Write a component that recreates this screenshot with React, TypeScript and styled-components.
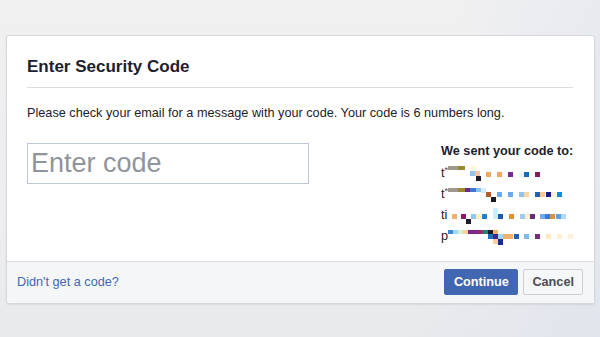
import React from "react";
import styled, { createGlobalStyle } from "styled-components";

const Global = createGlobalStyle`
  html, body { margin: 0; padding: 0; }
  body {
    width: 600px;
    height: 337px;
    overflow: hidden;
    background:
      linear-gradient(100deg, rgba(255,255,255,0) 70%, rgba(214,222,236,0.45) 100%),
      linear-gradient(180deg, #f0f0f1 0%, #eeeef0 60%, #e9eaec 100%);
    font-family: "Liberation Sans", Arial, Helvetica, sans-serif;
  }
`;

const Page = styled.div`
  padding: 35px 5px 0 6px;
`;

const Card = styled.div`
  width: 589px;
  box-sizing: border-box;
  background: #fff;
  border: 1px solid #d6d8db;
  border-radius: 3px;
  box-shadow: 0 1px 2px rgba(0, 0, 0, 0.08);
  overflow: hidden;
`;

const Header = styled.div`
  margin: 0 21px 0 20px;
  padding: 21px 0 10px 0;
  border-bottom: 1px solid #dadde1;
`;

const Title = styled.h2`
  margin: 0;
  font-size: 17px;
  line-height: 20px;
  font-weight: bold;
  color: #1d2129;
`;

const Body = styled.div`
  padding: 17px 21px 14px 20px;
`;

const Intro = styled.p`
  margin: 0;
  font-size: 12.7px;
  line-height: 16px;
  color: #1d2129;
`;

const Row = styled.div`
  display: flex;
  justify-content: space-between;
  align-items: flex-start;
  margin-top: 22px;
`;

const CodeInput = styled.input`
  width: 282px;
  height: 41px;
  box-sizing: border-box;
  border: 1px solid #bdc7d8;
  padding: 0 3px;
  font-family: "Liberation Sans", Arial, sans-serif;
  font-size: 27px;
  color: #1d2129;
  outline: none;
  &::placeholder {
    color: #90949c;
  }
`;

const SentBox = styled.div`
  width: 132px;
`;

const SentTitle = styled.div`
  font-size: 12.7px;
  line-height: 16px;
  font-weight: bold;
  color: #1d2129;
  white-space: nowrap;
  margin-bottom: 4px;
`;

const Contact = styled.div`
  position: relative;
  height: 21px;
  font-size: 12.7px;
  line-height: 21px;
  color: #1d2129;
`;

const Star = styled.span`
  font-size: 9px;
  vertical-align: top;
  line-height: 14px;
  color: #444;
`;

const Mosaic = styled.svg`
  position: absolute;
  left: 0;
  top: 0;
  overflow: visible;
`;

const Footer = styled.div`
  display: flex;
  align-items: center;
  justify-content: space-between;
  padding: 7px 11px 8px 10px;
  background: #f5f6f7;
  border-top: 1px solid #dadde1;
`;

const Link = styled.a`
  font-size: 12.7px;
  color: #4267b2;
  text-decoration: none;
  cursor: pointer;
`;

const Actions = styled.div`
  display: flex;
  gap: 5px;
`;

const Button = styled.button<{ $primary?: boolean }>`
  height: 26px;
  box-sizing: border-box;
  padding: 0 ${(p) => (p.$primary ? "8.5px" : "8px")};
  border-radius: 2px;
  border: 1px solid ${(p) => (p.$primary ? "#4267b2" : "#ccd0d5")};
  background: ${(p) => (p.$primary ? "#4267b2" : "#f5f6f7")};
  color: ${(p) => (p.$primary ? "#fff" : "#4b4f56")};
  font-family: "Liberation Sans", Arial, sans-serif;
  font-size: 12.7px;
  font-weight: bold;
  cursor: pointer;
`;

type R = [number, number, number, number, string];

const rows: { letter: string; star: boolean; rects: R[] }[] = [
  {
    letter: "t",
    star: true,
    rects: [
      [7, 3, 10, 4, "#a09888"],
      [17, 3, 7, 4, "#9a8a2e"],
      [30, 3, 5, 5, "#fdf6d2"],
      [29, 8, 5, 5, "#8ec4f0"],
      [34, 8, 5, 5, "#f8c890"],
      [35, 13, 5, 5, "#1c1c28"],
      [45, 9, 5, 5, "#f0a860"],
      [56, 9, 5, 5, "#f0a860"],
      [67, 9, 5, 5, "#7a2a90"],
      [78, 9, 5, 5, "#e6f4fa"],
      [83, 9, 5, 5, "#1e6ab8"],
      [94, 9, 5, 5, "#8a1a5c"],
    ],
  },
  {
    letter: "t",
    star: true,
    rects: [
      [7, 4, 10, 4, "#a09890"],
      [17, 4, 7, 4, "#9a8a30"],
      [24, 4, 5, 4, "#6a2a8a"],
      [29, 4, 6, 4, "#3a7ad0"],
      [35, 4, 5, 4, "#8ac0f0"],
      [40, 4, 5, 5, "#d8ecfa"],
      [45, 8, 5, 5, "#b85a20"],
      [50, 13, 5, 5, "#1c1c28"],
      [56, 8, 5, 5, "#6aaaf0"],
      [67, 8, 5, 5, "#6aaaf0"],
      [78, 8, 5, 5, "#90c4f0"],
      [83, 8, 5, 5, "#f8d8a0"],
      [94, 8, 5, 5, "#2060b0"],
      [99, 8, 5, 5, "#f8c890"],
      [105, 8, 5, 5, "#1a1a90"],
      [110, 8, 5, 5, "#fdf0d0"],
      [116, 8, 5, 5, "#1a88d0"],
    ],
  },
  {
    letter: "ti",
    star: false,
    rects: [
      [11, 9, 5, 5, "#f0b070"],
      [20, 9, 5, 5, "#8a1a6a"],
      [25, 14, 5, 5, "#1c1c28"],
      [30, 9, 5, 5, "#90c8f0"],
      [35, 9, 5, 5, "#fdf0c0"],
      [41, 9, 5, 5, "#2080d0"],
      [52, 3, 5, 11, "#c8f0fa"],
      [57, 9, 5, 5, "#1a5ab0"],
      [68, 9, 5, 5, "#e09030"],
      [79, 9, 5, 5, "#a0c8f0"],
      [84, 9, 5, 5, "#fdf0d0"],
      [89, 9, 5, 5, "#6a2a7a"],
      [99, 9, 5, 5, "#70aaf0"],
      [104, 9, 5, 5, "#3a7ad0"],
      [109, 9, 5, 5, "#e09040"],
      [115, 9, 5, 5, "#60a0e0"],
      [120, 9, 5, 5, "#b0d8f8"],
    ],
  },
  {
    letter: "p",
    star: false,
    rects: [
      [7, 4, 5, 4, "#3a8ad8"],
      [12, 4, 5, 4, "#a0d8f0"],
      [17, 4, 5, 4, "#d0f0d0"],
      [22, 4, 5, 4, "#f8d0a0"],
      [27, 4, 10, 4, "#7a2a8a"],
      [37, 4, 5, 4, "#9a2a6a"],
      [42, 4, 5, 4, "#208080"],
      [47, 4, 5, 4, "#1c1c28"],
      [52, 4, 5, 4, "#f0b070"],
      [47, 8, 5, 5, "#2070c0"],
      [52, 8, 5, 5, "#3a2a8a"],
      [57, 8, 5, 5, "#a0d8f0"],
      [62, 8, 10, 5, "#f0b070"],
      [73, 8, 5, 5, "#2060b0"],
      [83, 8, 5, 5, "#80b8f0"],
      [94, 8, 5, 5, "#7a2a7a"],
      [105, 8, 5, 5, "#fde8c0"],
      [116, 8, 5, 5, "#fdf0d0"],
      [127, 8, 5, 5, "#fdf0d8"],
      [52, 13, 5, 5, "#f8d0a0"],
      [57, 13, 5, 6, "#1a2a8a"],
    ],
  },
];

export default function App() {
  return (
    <>
      <Global />
      <Page>
        <Card>
          <Header>
            <Title>Enter Security Code</Title>
          </Header>
          <Body>
            <Intro>
              Please check your email for a message with your code. Your code is 6 numbers long.
            </Intro>
            <Row>
              <CodeInput placeholder="Enter code" />
              <SentBox>
                <SentTitle>We sent your code to:</SentTitle>
                {rows.map((row, i) => (
                  <Contact key={i}>
                    {row.letter}
                    {row.star && <Star>*</Star>}
                    <Mosaic width="132" height="21" viewBox="0 0 132 21">
                      {row.rects.map(([x, y, w, h, c], j) => (
                        <rect key={j} x={x} y={y} width={w} height={h} fill={c} />
                      ))}
                    </Mosaic>
                  </Contact>
                ))}
              </SentBox>
            </Row>
          </Body>
          <Footer>
            <Link>Didn't get a code?</Link>
            <Actions>
              <Button $primary>Continue</Button>
              <Button>Cancel</Button>
            </Actions>
          </Footer>
        </Card>
      </Page>
    </>
  );
}
